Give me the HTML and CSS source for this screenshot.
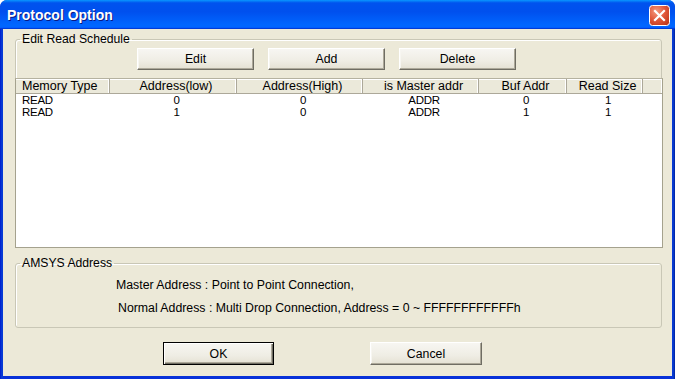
FILE: index.html
```html
<!DOCTYPE html>
<html>
<head>
<meta charset="utf-8">
<link rel="stylesheet" href="styles.css">
</head>
<body>
<div class="window">
  <div class="titlebar">
    <span class="title">Protocol Option</span>
    <span class="close">
      <svg width="21" height="21" viewBox="0 0 21 21">
        <defs>
          <radialGradient id="cg" cx="35%" cy="30%" r="80%">
            <stop offset="0" stop-color="#f59a7e"/>
            <stop offset="0.55" stop-color="#e0573a"/>
            <stop offset="1" stop-color="#c23a1c"/>
          </radialGradient>
        </defs>
        <rect x="0.5" y="0.5" width="20" height="20" rx="3" fill="url(#cg)" stroke="#fff"/>
        <path d="M6 6 L15 15 M15 6 L6 15" stroke="#fff" stroke-width="2.2" stroke-linecap="square"/>
      </svg>
    </span>
  </div>
  <div class="client">
    <fieldset class="group schedule">
      <legend>Edit Read Schedule</legend>
      <div class="toolbar">
        <button class="btn">Edit</button>
        <button class="btn">Add</button>
        <button class="btn">Delete</button>
      </div>
      <div class="listview">
        <div class="lv-head">
          <div class="hc left">Memory Type</div>
          <div class="hc">Address(low)</div>
          <div class="hc">Address(High)</div>
          <div class="hc">is Master addr</div>
          <div class="hc">Buf Addr</div>
          <div class="hc">Read Size</div>
          <div class="hc fill"></div>
        </div>
        <div class="lv-row">
          <div class="c left">READ</div><div class="c">0</div><div class="c">0</div><div class="c">ADDR</div><div class="c">0</div><div class="c">1</div><div class="c"></div>
        </div>
        <div class="lv-row">
          <div class="c left">READ</div><div class="c">1</div><div class="c">0</div><div class="c">ADDR</div><div class="c">1</div><div class="c">1</div><div class="c"></div>
        </div>
      </div>
    </fieldset>
    <fieldset class="group amsys">
      <legend>AMSYS Address</legend>
      <p class="line first">Master Address : Point to Point Connection,</p>
      <p class="line second">Normal Address : Multi Drop Connection, Address = 0 ~ FFFFFFFFFFFFh</p>
    </fieldset>
    <div class="actions">
      <button class="btn default">OK</button>
      <button class="btn cancel">Cancel</button>
    </div>
  </div>
</div>
</body>
</html>
```
FILE: styles.css
```css
* { box-sizing: border-box; }
html, body { margin: 0; padding: 0; background: #fff; }
body { width: 675px; height: 379px; overflow: hidden; font-family: "Liberation Sans", Arial, sans-serif; font-size: 12px; color: #000; }

.window {
  width: 675px;
  height: 379px;
  display: flex;
  flex-direction: column;
  background: linear-gradient(90deg, #0019cf 0, #0842d4 2px, #0831d9 3px, #0831d9 672px, #0842d4 673px, #001ea0 675px);
  border-radius: 7px 7px 0 0;
}

.titlebar {
  height: 29px;
  flex: none;
  display: flex;
  align-items: center;
  justify-content: space-between;
  padding: 0 5px 0 7px;
  border-radius: 7px 7px 0 0;
  background: linear-gradient(180deg, #0997ff 0%, #0053ee 10%, #0050ee 40%, #0066ff 85%, #0066ff 92%, #005bff 95%, #003dd7 97%, #003dd7 100%);
}
.title {
  color: #fff;
  font-weight: bold;
  font-size: 14px;
  text-shadow: 1px 1px #0a1883;
  padding-top: 1px;
}
.close { display: flex; width: 21px; height: 21px; margin-top: 1px; }

.client {
  flex: 1;
  margin: 0 3px 3px;
  background: #ece9d8;
  display: flex;
  flex-direction: column;
  padding-top: 3px;
}

.group {
  margin: 0 10px 0 12px;
  padding: 0;
  border: 1px solid #c9c7b6;
  border-radius: 3px;
  min-width: 0;
  box-shadow: 1px 1px 0 #fff inset;
}
.group legend {
  padding: 0 2px;
  margin-left: 4px;
  line-height: 14px;
  height: 14px;
  font-size: 12.2px;
  color: #000;
}

.toolbar {
  display: flex;
  gap: 14px;
  padding-left: 121px;
  margin-top: 2px;
}
.btn {
  font-family: "Liberation Sans", Arial, sans-serif;
  font-size: 12.3px;
  color: #000;
  width: 117px;
  height: 22px;
  padding: 0;
  border: 1px solid;
  border-color: #fff #6f6d63 #6f6d63 #fff;
  box-shadow: inset -1px -1px #aca899, inset 1px 1px #f7f6f1;
  background: linear-gradient(180deg, #f7f6f2 0%, #efede4 60%, #e4e1d3 100%);
  border-radius: 0;
}

.listview {
  margin: 8px -2px -1px -1px;
  height: 170px;
  background: #fff;
  border: 1px solid #a5a28e;
  border-top-color: #b5b2a0;
}
.lv-head, .lv-row {
  display: grid;
  grid-template-columns: 94px 127px 126px 116px 88px 76px 1fr;
}
.lv-head {
  height: 15px;
  background: #ebe9da;
  border-bottom: 1px solid #aca899;
}
.hc {
  font-size: 12.5px;
  line-height: 14px;
  text-align: center;
  padding-left: 6px;
  border-right: 1px solid #aca899;
  box-shadow: inset -1px 0 #fff, inset 0 1px #fff;
  white-space: nowrap;
  overflow: hidden;
}
.hc.left { text-align: left; }
.hc.fill { border-right: 0; }

.lv-row { height: 12px; }
.c {
  font-size: 11.5px;
  line-height: 12px;
  height: 12px;
  text-align: center;
  padding-left: 6px;
  white-space: nowrap;
  letter-spacing: -0.3px;
}
.c.left { text-align: left; }

.amsys {
  margin-top: 8px;
  padding: 8px 0 12px;
}
.line {
  margin: 0;
  line-height: 14px;
  font-size: 12.3px;
  white-space: nowrap;
}
.line.first { padding-left: 100px; }
.line.second { padding-left: 102px; margin-top: 9px; }

.actions {
  display: flex;
  gap: 96px;
  padding-left: 160px;
  margin-top: 14px;
}
.actions .btn { width: 111px; height: 23px; }
.actions .btn.cancel { width: 112px; }
.btn.default {
  border: 1px solid #000;
  box-shadow: inset 1px 1px #fff, inset -1px -1px #6f6d63, inset -2px -2px #aca899;
}
```
